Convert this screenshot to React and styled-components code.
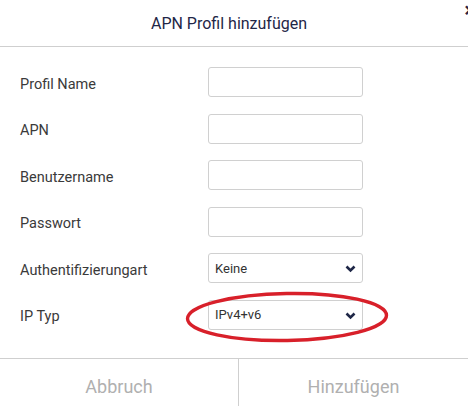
import styled, { createGlobalStyle } from "styled-components";

const Global = createGlobalStyle`
body{
margin:0;
background:#fff;
font-family:Roboto, "Liberation Sans", sans-serif;
}
`;

const Dialog = styled.div`
position:relative;
width:468px;
height:406px;
overflow:hidden;
display:flex;
flex-direction:column;
background:#fff;
`;

const Header = styled.div`
height:46px;
display:flex;
align-items:center;
justify-content:center;
border-bottom:1px solid #cfcfcf;
font-size:16px;
color:#1f2747;
padding-right:10px;
`;

const Close = styled.div`
position:absolute;
top:0px;
right:-7px;
font-size:20px;
color:#2a2440;
font-weight:bold;
line-height:20px;
`;

const Form = styled.div`
display:flex;
flex-direction:column;
gap:16.6px;
padding:20px 0 28px 20px;
`;

const Row = styled.div`
display:flex;
align-items:center;
height:30px;
`;

const Label = styled.div`
width:188px;
font-size:14.5px;
color:#3a3a3a;
margin-top:4px;
`;

const Input = styled.input`
box-sizing:border-box;
width:155px;
height:30px;
border:1.5px solid #d0d0d0;
border-radius:3px;
outline:none;
padding:0 6px;
`;

const SelectBox = styled.div`
position:relative;
box-sizing:border-box;
width:155px;
height:30px;
border:1.5px solid #d0d0d0;
border-radius:3px;
display:flex;
align-items:center;
justify-content:space-between;
padding:0 6px 0 6px;
font-size:13px;
color:#333;
`;

const Chevron = styled.svg`
width:11px;
height:8px;
margin-top:2px;
`;

const Footer = styled.div`
flex:1;
display:grid;
grid-template-columns:239px 1fr;
border-top:1px solid #cfcfcf;
`;

const FootButton = styled.div`
display:flex;
align-items:center;
justify-content:center;
font-size:18px;
color:#b0b0b0;
padding-top:8px;
border-right:${(p) => (p.divider ? "1px solid #cfcfcf" : "none")};
`;

const Mark = styled.svg`
position:absolute;
left:183px;
top:286px;
pointer-events:none;
`;

const Select = ({ value }) => (
    <SelectBox>
        {value}
        <Chevron viewBox="0 0 11 8">
            <path d="M1.5 1.5 L5.5 5.5 L9.5 1.5" fill="none" stroke="#1f2747" strokeWidth="2.6" />
        </Chevron>
    </SelectBox>
);

const fields = ["Profil Name", "APN", "Benutzername", "Passwort"];

const App = () => {
    return (
        <Dialog>
            <Global />
            <Header>APN Profil hinzufügen</Header>
            <Close>×</Close>
            <Form>
                {fields.map((f) => (
                    <Row key={f}>
                        <Label>{f}</Label>
                        <Input />
                    </Row>
                ))}
                <Row>
                    <Label>Authentifizierungart</Label>
                    <Select value="Keine" />
                </Row>
                <Row>
                    <Label>IP Typ</Label>
                    <Select value="IPv4+v6" />
                </Row>
            </Form>
            <Footer>
                <FootButton divider>Abbruch</FootButton>
                <FootButton>Hinzufügen</FootButton>
            </Footer>
            <Mark width="212" height="62" viewBox="0 0 212 62">
                <ellipse cx="104" cy="31" rx="99.5" ry="23.5" fill="none" stroke="#d8202a" strokeWidth="3.4" transform="rotate(-1 104 31)" />
            </Mark>
        </Dialog>
    );
};

export default App;
